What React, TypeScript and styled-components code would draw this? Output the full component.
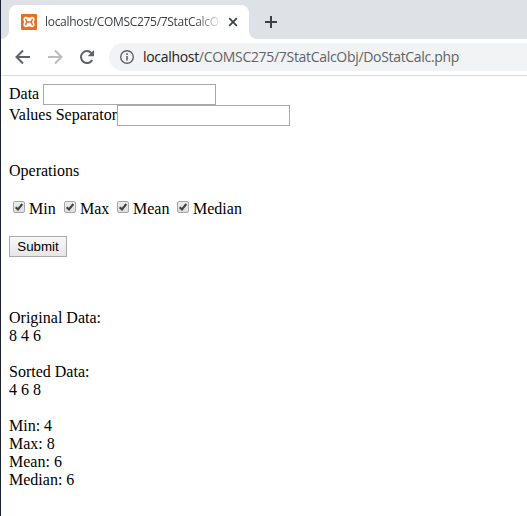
import React from "react";
import styled, { createGlobalStyle } from "styled-components";

const GlobalStyle = createGlobalStyle`
  html, body { margin: 0; padding: 0; background: #fff; overflow: hidden; }
  * { box-sizing: border-box; }
`;

const Window = styled.div`
  display: flex;
  flex-direction: column;
  width: 527px;
  height: 516px;
  overflow: hidden;
  border-left: 1px solid #1a2130;
  background: #fff;
`;

const TabStrip = styled.div`
  display: flex;
  align-items: flex-end;
  flex: none;
  height: 39px;
  background: #dee1e6;
`;

const TabFoot = styled.div<{ $side: "left" | "right" }>`
  flex: none;
  width: 8px;
  height: 8px;
  background: radial-gradient(
    circle at ${(p) => (p.$side === "left" ? "0 0" : "100% 0")},
    transparent 7.5px,
    #fff 8.3px
  );
`;

const Tab = styled.div`
  display: flex;
  align-items: center;
  flex: none;
  width: 240px;
  height: 34px;
  padding: 0 11px 0 12px;
  border-radius: 8px 8px 0 0;
  background: #fff;
`;

const TabTitle = styled.div`
  width: 175px;
  margin: 0 9px 0 8px;
  white-space: nowrap;
  font: 12px/18px "Open Sans", sans-serif;
  letter-spacing: -0.3px;
  color: #3c4043;
  mask-image: linear-gradient(to right, #000 150px, transparent 178px);
`;

const Icon = styled.svg`
  display: block;
  flex: none;
`;

const NewTab = styled.div`
  align-self: flex-start;
  margin: 15px 0 0 7px;
`;

const Toolbar = styled.div`
  display: flex;
  align-items: center;
  flex: none;
  height: 37px;
  padding: 0 0 1px 14px;
  border-bottom: 1px solid #d9dadc;
  background: #fff;
`;

const NavIcons = styled.div`
  display: flex;
  gap: 16px;
  width: 94px;
`;

const AddressBar = styled.div`
  display: flex;
  align-items: center;
  flex: 1;
  height: 28px;
  margin-top: 1px;
  padding-left: 10px;
  border-radius: 14px 0 0 14px;
  background: #f1f3f4;
`;

const Url = styled.div`
  margin-left: 8px;
  white-space: nowrap;
  font: 14px/20px "Open Sans", sans-serif;
  letter-spacing: -0.31px;
  color: #5f6368;
`;

const Host = styled.span`
  color: #202124;
`;

const Page = styled.main`
  flex: 1;
  padding: 8px;
  font: 16px/18px "Liberation Serif", "Times New Roman", serif;
  color: #000;
`;

const Field = styled.label<{ $gap: number }>`
  display: flex;
  align-items: flex-start;
  gap: ${(p) => p.$gap}px;
  height: 21px;
`;

const FieldName = styled.span`
  padding-top: 1px;
  white-space: nowrap;
`;

const TextInput = styled.input`
  width: 173px;
  height: 21px;
  margin: 0;
  padding: 1px;
  border: 1px solid #a9a9a9;
  border-radius: 0;
  outline: none;
  background: #fff;
`;

const Heading = styled.p`
  margin: 36px 0 20px;
`;

const Options = styled.div`
  display: flex;
  height: 18px;
`;

const Option = styled.label<{ $width: number }>`
  display: flex;
  gap: 3px;
  width: ${(p) => p.$width}px;
  padding-left: 4px;
`;

const CheckBox = styled.span`
  flex: none;
  width: 12px;
  height: 12px;
  margin: 1px 1px 0 0;
  border: 1px solid #a6a6a6;
  border-radius: 2px;
  background: linear-gradient(#ededed, #dedede);
`;

const SubmitButton = styled.button`
  display: block;
  width: 58px;
  height: 21px;
  margin: 18px 0 52px;
  padding: 0;
  border: 1px solid #a9a9a9;
  border-radius: 0;
  background: linear-gradient(#f8f8f8, #e6e6e6);
  font: 13.333px/17px "Liberation Sans", Arial, sans-serif;
  color: #000;
`;

const Result = styled.div`
  margin-bottom: 18px;
`;

const FAVICON = (
  <Icon width="16" height="16" viewBox="0 0 16 16">
    <rect width="16" height="16" rx="1" fill="#e8701c" />
    <path
      d="M5 2.800C3.300 2.800 2.400 4 2.400 5.400 2.400 6.600 3 7.200 3.200 8 3 8.800 2.400 9.400 2.400 10.600 2.400 12 3.300 13.200 5 13.200c1.400 0 2-1 3-1s1.600 1 3 1c1.700 0 2.600-1.200 2.600-2.600 0-1.200-.6-1.800-.8-2.600.2-.8.8-1.400.8-2.600 0-1.400-.9-2.600-2.600-2.600-1.400 0-2 1-3 1s-1.600-1-3-1Z"
      fill="#fff"
    />
    <path
      d="M4.700 5.200 5.800 8 4.700 10.800M11.300 5.200 10.200 8l1.100 2.800M5.800 8h4.400"
      fill="none"
      stroke="#e8701c"
      strokeWidth="1.500"
      strokeLinecap="round"
    />
  </Icon>
);

const Arrow = ({ color, flip }: { color: string; flip?: boolean }) => (
  <Icon width="16" height="16" viewBox="0 0 16 16">
    <path
      d={flip ? "M1 8h13M8 1.5 14.5 8 8 14.5" : "M15 8H2M8 1.5 1.5 8 8 14.5"}
      fill="none"
      stroke={color}
      strokeWidth="2"
    />
  </Icon>
);

const operations = [
  { name: "Min", width: 51 },
  { name: "Max", width: 53 },
  { name: "Mean", width: 60 },
  { name: "Median", width: 75 },
];

const results = [
  ["Original Data:", "8 4 6"],
  ["Sorted Data:", "4 6 8"],
  ["Min: 4", "Max: 8", "Mean: 6", "Median: 6"],
];

export default function App() {
  return (
    <>
      <GlobalStyle />
      <Window>
        <TabStrip>
          <TabFoot $side="left" />
          <Tab>
            {FAVICON}
            <TabTitle>localhost/COMSC275/7StatCalcO</TabTitle>
            <Icon width="10" height="10" viewBox="0 0 10 10">
              <path d="m1.2 1.2 7.6 7.6M8.8 1.2 1.2 8.8" stroke="#3c4043" strokeWidth="1.7" />
            </Icon>
          </Tab>
          <TabFoot $side="right" />
          <NewTab>
            <Icon width="14" height="14" viewBox="0 0 14 14">
              <path d="M7 1v12M1 7h12" stroke="#3c4043" strokeWidth="2" />
            </Icon>
          </NewTab>
        </TabStrip>
        <Toolbar>
          <NavIcons>
            <Arrow color="#5f6368" />
            <Arrow color="#babcbe" flip />
            <Icon width="16" height="16" viewBox="0 0 16 16">
              <path
                d="M13.2 11A6 6 0 1 1 12.4 4"
                fill="none"
                stroke="#5f6368"
                strokeWidth="2"
              />
              <path d="M15 1v6.3H8.7Z" fill="#5f6368" />
            </Icon>
          </NavIcons>
          <AddressBar>
            <Icon width="16" height="16" viewBox="0 0 16 16">
              <circle cx="8" cy="8" r="6.3" fill="none" stroke="#5f6368" strokeWidth="1.4" />
              <path d="M8 4.3v1.6M8 7v4.6" stroke="#5f6368" strokeWidth="1.6" />
            </Icon>
            <Url>
              <Host>localhost</Host>/COMSC275/7StatCalcObj/DoStatCalc.php
            </Url>
          </AddressBar>
        </Toolbar>
        <Page>
          <Field $gap={4}>
            <FieldName>Data</FieldName>
            <TextInput />
          </Field>
          <Field $gap={0}>
            <FieldName>Values Separator</FieldName>
            <TextInput />
          </Field>
          <Heading>Operations</Heading>
          <Options>
            {operations.map((op) => (
              <Option key={op.name} $width={op.width}>
                <CheckBox>
                  <Icon width="10" height="10" viewBox="0 0 10 10">
                    <path d="M1.7 5.2 4 7.5 8.3 2" fill="none" stroke="#424242" strokeWidth="2.1" />
                  </Icon>
                </CheckBox>
                {op.name}
              </Option>
            ))}
          </Options>
          <SubmitButton>Submit</SubmitButton>
          {results.map((lines) => (
            <Result key={lines[0]}>
              {lines.map((line) => (
                <div key={line}>{line}</div>
              ))}
            </Result>
          ))}
        </Page>
      </Window>
    </>
  );
}
